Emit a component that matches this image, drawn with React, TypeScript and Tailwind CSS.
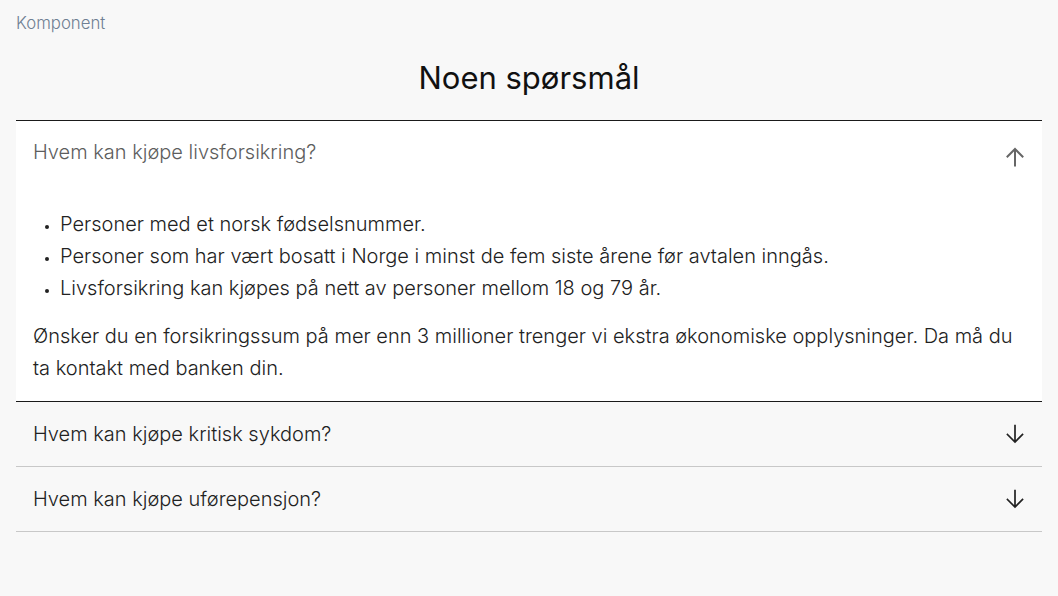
import React from "react";

const font = { fontFamily: "Inter, 'Noto Sans', sans-serif" };

function ArrowUp({ className }: { className?: string }) {
  return (
    <svg viewBox="0 0 24 24" className={className} fill="none" stroke="currentColor" strokeWidth={2} strokeLinecap="square">
      <path d="M12 20.5V4.5M4.5 11.5l7.5-7.5 7.5 7.5" />
    </svg>
  );
}
function ArrowDown({ className }: { className?: string }) {
  return (
    <svg viewBox="0 0 24 24" className={className} fill="none" stroke="currentColor" strokeWidth={1.7} strokeLinecap="square">
      <path d="M12 3.5v16M4.5 12.5l7.5 7.5 7.5-7.5" />
    </svg>
  );
}

export default function App() {
  return (
    <div className="min-h-[596px] bg-[#f8f8f8] px-4 pt-[12px] text-[#1a1a1a]" style={font}>
      <div className="text-[16.8px] leading-[22px] font-light text-[#6f7f93]">Komponent</div>
      <h2 className="mt-[24px] text-center text-[31px] leading-[40px] font-normal text-[#111]">Noen spørsmål</h2>
      <div className="mt-[22px] border-t border-[#1a1a1a]">
        <div className="bg-white border-b border-[#1a1a1a]">
          <div className="flex items-start justify-between pl-[17px] pr-[15px] pt-[17px] pb-[27px]">
            <span className="text-[20px] leading-[28px] font-light text-[#5d5d5d]">Hvem kan kjøpe livsforsikring?</span>
            <ArrowUp className="mt-[7px] h-[24px] w-[24px] text-[#666]" />
          </div>
          <div className="pl-[17px] pr-[14px] pb-[17px] text-[20px] leading-[32px] font-light text-[#222]">
            <ul className="mt-[12px] pl-[27px] list-disc marker:text-[12px]">
              <li>Personer med et norsk fødselsnummer.</li>
              <li>Personer som har vært bosatt i Norge i minst de fem siste årene før avtalen inngås.</li>
              <li>Livsforsikring kan kjøpes på nett av personer mellom 18 og 79 år.</li>
            </ul>
            <p className="mt-[16px]">
              Ønsker du en forsikringssum på mer enn 3 millioner trenger vi ekstra økonomiske opplysninger. Da må du ta kontakt med banken din.
            </p>
          </div>
        </div>
        <div className="flex h-[65px] items-center justify-between border-b border-[#c8c8c8] pl-[17px] pr-[15px]">
          <span className="text-[20px] leading-[28px] font-light text-[#222]">Hvem kan kjøpe kritisk sykdom?</span>
          <ArrowDown className="h-[24px] w-[24px] text-[#222]" />
        </div>
        <div className="flex h-[65px] items-center justify-between border-b border-[#c8c8c8] pl-[17px] pr-[15px]">
          <span className="text-[20px] leading-[28px] font-light text-[#222]">Hvem kan kjøpe uførepensjon?</span>
          <ArrowDown className="h-[24px] w-[24px] text-[#222]" />
        </div>
      </div>
    </div>
  );
}
